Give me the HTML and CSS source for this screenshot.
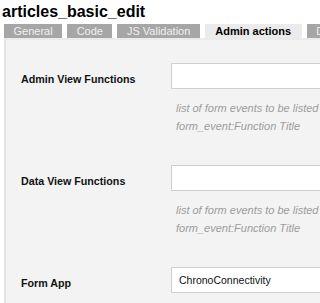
FILE: index.html
```html
<!DOCTYPE html>
<html>
<head>
<meta charset="utf-8">
<link rel="stylesheet" href="styles.css">
</head>
<body>
<div class="page">
  <h1 class="title">articles_basic_edit</h1>
  <ul class="tabs">
    <li class="tab">General</li>
    <li class="tab">Code</li>
    <li class="tab">JS Validation</li>
    <li class="tab active">Admin actions</li>
    <li class="tab">Data Access</li>
  </ul>
  <div class="panel">
    <div class="row">
      <label class="label">Admin View Functions</label>
      <div class="field">
        <input class="input" type="text" value="">
        <div class="hint">list of form events to be listed as admin functions<br>form_event:Function Title</div>
      </div>
    </div>
    <div class="row">
      <label class="label">Data View Functions</label>
      <div class="field">
        <input class="input" type="text" value="">
        <div class="hint">list of form events to be listed as data functions<br>form_event:Function Title</div>
      </div>
    </div>
    <div class="row">
      <label class="label">Form App</label>
      <div class="field">
        <input class="input value" type="text" value="ChronoConnectivity">
      </div>
    </div>
  </div>
</div>
</body>
</html>
```

FILE: styles.css
```css
html, body {
  margin: 0;
  padding: 0;
  background: #ffffff;
  overflow: hidden;
}
.page {
  width: 700px;
  font-family: "Liberation Sans", Arial, sans-serif;
}
.title {
  margin: 3px 0 3px 2px;
  font-size: 16px;
  line-height: 18px;
  font-weight: bold;
  color: #000;
}
.tabs {
  list-style: none;
  margin: 0 0 0 4px;
  padding: 0;
  display: flex;
  gap: 5px;
}
.tab {
  background: #a6a6a6;
  color: #f0f0f0;
  font-size: 11px;
  line-height: 14px;
  height: 14px;
  padding: 0 9.5px;
  white-space: nowrap;
}
.tab.active {
  background: #ebebeb;
  color: #000;
  font-weight: bold;
  padding: 0 10.5px;
}
.panel {
  margin-left: 4px;
  background: #f3f3f3;
  border-top: 2px solid #ebebeb;
  border-left: 2px solid #e4e4e4;
  padding: 23px 0 20px 15px;
}
.row {
  display: grid;
  grid-template-columns: 150px 1fr;
  margin-bottom: 30px;
}
.label {
  font-size: 10.7px;
  font-weight: bold;
  color: #111;
  line-height: 26px;
  padding-top: 3px;
}
.field {
  display: flex;
  flex-direction: column;
}
.input {
  box-sizing: border-box;
  width: 320px;
  height: 26px;
  margin: 0;
  border: 1px solid #cfcfcf;
  background: #fff;
  padding: 0 7px;
  font-family: "Liberation Sans", Arial, sans-serif;
  font-size: 10.5px;
  color: #111;
  outline: none;
}
.hint {
  margin-top: 10px;
  padding-left: 5px;
  font-size: 11px;
  line-height: 18px;
  font-style: italic;
  color: #9c9c9c;
  white-space: nowrap;
}
```
